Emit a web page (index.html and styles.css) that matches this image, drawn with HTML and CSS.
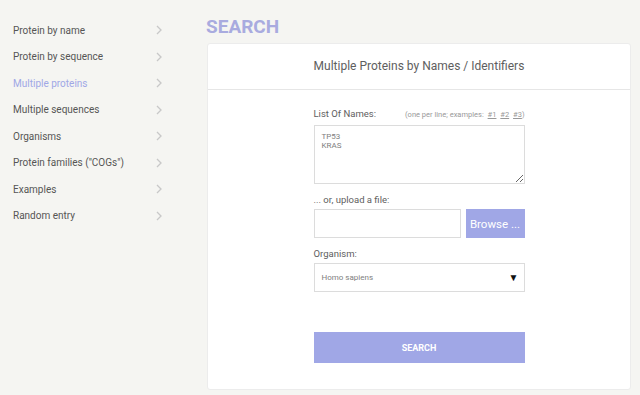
FILE: index.html
```html
<!DOCTYPE html>
<html lang="en">
<head>
	<meta charset="UTF-8" />
	<meta name="viewport" content="width=device-width, initial-scale=1.0" />
	<title>Search - Multiple Proteins</title>
	<link rel="stylesheet" href="styles.css">
</head>
<body>
	<!-- Sidebar -->
	<nav class="sidebar">
		<a class="nav-item" href="#">Protein by name<svg class="chev" viewBox="0 0 6 10"><polyline points="1,1 5,5 1,9" /></svg></a>
		<a class="nav-item" href="#">Protein by sequence<svg class="chev" viewBox="0 0 6 10"><polyline points="1,1 5,5 1,9" /></svg></a>
		<a class="nav-item active" href="#">Multiple proteins<svg class="chev" viewBox="0 0 6 10"><polyline points="1,1 5,5 1,9" /></svg></a>
		<a class="nav-item" href="#">Multiple sequences<svg class="chev" viewBox="0 0 6 10"><polyline points="1,1 5,5 1,9" /></svg></a>
		<a class="nav-item" href="#">Organisms<svg class="chev" viewBox="0 0 6 10"><polyline points="1,1 5,5 1,9" /></svg></a>
		<a class="nav-item" href="#">Protein families ("COGs")<svg class="chev" viewBox="0 0 6 10"><polyline points="1,1 5,5 1,9" /></svg></a>
		<a class="nav-item" href="#">Examples<svg class="chev" viewBox="0 0 6 10"><polyline points="1,1 5,5 1,9" /></svg></a>
		<a class="nav-item" href="#">Random entry<svg class="chev" viewBox="0 0 6 10"><polyline points="1,1 5,5 1,9" /></svg></a>
	</nav>
	<!-- End of Sidebar -->

	<!-- Main -->
	<main class="main">
		<h1 class="page-title">SEARCH</h1>
		<section class="card">
			<div class="card-header">Multiple Proteins by Names / Identifiers</div>
			<form class="card-body">
				<div class="field-label">
					<span>List Of Names:</span>
					<span class="hint">(one per line; examples: <a href="#">#1</a> <a href="#">#2</a> <a href="#">#3</a>)</span>
				</div>
				<textarea class="names" name="names">TP53
KRAS</textarea>

				<div class="field-label upload-label">... or, upload a file:</div>
				<div class="upload-row">
					<div class="file-box"></div>
					<button type="button" class="browse">Browse ...</button>
				</div>

				<div class="field-label upload-label">Organism:</div>
				<div class="select">
					<span>Homo sapiens</span>
					<span class="arrow">&#9660;</span>
				</div>

				<button type="submit" class="search-btn">SEARCH</button>
			</form>
		</section>
	</main>
	<!-- End of Main -->
</body>
</html>
```

FILE: styles.css
```css
/* Variables */
:root {
	--accent: #a0a7e6;
	--title: #a9abdf;
	--bg: #f5f5f2;
	--text: #555;
	--muted: #888;
	--border: #dcdcdc;
}
/* End of Variables */

* {
	margin: 0;
	padding: 0;
	box-sizing: border-box;
	font-family: Roboto, "Liberation Sans", sans-serif;
}

body {
	display: flex;
	background: var(--bg);
	color: var(--text);
	height: 395px;
	overflow: hidden;
}

/* Sidebar */
.sidebar {
	width: 206px;
	padding-top: 17px;
}

.nav-item {
	display: flex;
	align-items: center;
	justify-content: space-between;
	width: 165px;
	height: 26.5px;
	padding-left: 13px;
	padding-right: 3px;
	font-size: 10px;
	color: var(--text);
	text-decoration: none;
}

.nav-item.active {
	color: var(--accent);
}

.chev {
	width: 6px;
	height: 10px;
	fill: none;
	stroke: #c8c8c8;
	stroke-width: 1.3;
}

/* Main */
.main {
	flex: 1;
	padding-right: 9px;
}

.page-title {
	font-size: 19px;
	font-weight: 700;
	color: var(--title);
	line-height: 22px;
	margin-top: 16px;
	margin-bottom: 5px;
}

.card {
	margin-left: 1px;
	background: #fff;
	border: 1px solid #ececec;
	border-radius: 3px;
	height: 347px;
}

.card-header {
	height: 46px;
	line-height: 45px;
	text-align: center;
	font-size: 12px;
	color: #5e5e5e;
	border-bottom: 1px solid #e6e6e6;
}

.card-body {
	width: 211px;
	margin: 0 auto;
	padding-top: 18px;
	display: flex;
	flex-direction: column;
}

.field-label {
	display: flex;
	justify-content: space-between;
	align-items: baseline;
	font-size: 9.5px;
	line-height: 12px;
	color: #5e5e5e;
	margin-bottom: 4px;
}

.hint {
	font-size: 7.5px;
	color: #999;
}

.hint a {
	color: #999;
	margin-left: 2px;
}

.names {
	height: 59px;
	border: 1px solid var(--border);
	padding: 6px 7px;
	font-size: 8px;
	line-height: 9px;
	color: #808080;
	resize: vertical;
	outline: none;
}

.upload-label {
	margin-top: 10px;
	margin-bottom: 3px;
}

.upload-row {
	display: flex;
	gap: 5px;
	height: 29px;
}

.file-box {
	flex: 1;
	border: 1px solid var(--border);
}

.browse {
	width: 59px;
	border: none;
	background: var(--accent);
	color: #fff;
	font-size: 11.5px;
}

.select {
	display: flex;
	align-items: center;
	justify-content: space-between;
	height: 29px;
	padding: 0 5px 0 7px;
	border: 1px solid var(--border);
	font-size: 8px;
	color: #808080;
}

.select .arrow {
	font-size: 10px;
	color: #111;
}

.search-btn {
	margin-top: 40px;
	height: 31px;
	border: none;
	background: var(--accent);
	color: #fff;
	font-size: 9px;
	font-weight: 700;
}
```
